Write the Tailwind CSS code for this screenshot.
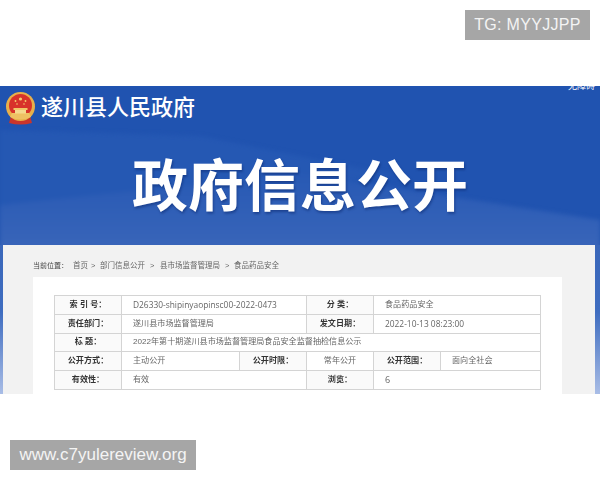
<!DOCTYPE html>
<html lang="zh-CN">

<head>
    <meta charset="UTF-8">
    <title>政府信息公开</title>
    <script src="https://cdn.jsdelivr.net/npm/@tailwindcss/browser@4"></script>
</head>

<body class="bg-white">
    <div class="relative w-[600px] h-[480px] overflow-hidden bg-white font-['Liberation_Sans','Noto_Sans_CJK_SC',sans-serif]">
        <!-- top right badge -->
        <div class="absolute z-10 top-[10px] right-[10px] w-[125px] h-[30px] flex items-center justify-center bg-[#a6a6a6] text-[#f4f4f4] text-[16px] tracking-[0.3px]">TG: MYYJJPP</div>

        <!-- article picture -->
        <div class="pt-[86px]">
            <div class="relative h-[308px] overflow-hidden bg-[#2053b0] flex flex-col">
                <!-- swooshes behind -->
                <svg class="absolute inset-0 blur-[2px]" width="600" height="308" viewBox="0 0 600 308">
                    <defs>
                        <linearGradient id="lowGlow" x1="0" y1="0" x2="0" y2="1">
                            <stop offset="0" stop-color="#2759b4" />
                            <stop offset="0.45" stop-color="#3f69bb" />
                            <stop offset="1" stop-color="#4169ba" />
                        </linearGradient>
                    </defs>
                    <path d="M0 44 L200 50 L400 90 L0 119 Z" fill="#2558b3" />
                    <path d="M0 119 L180 100 L300 87 L600 134 L600 308 L0 308 Z" fill="url(#lowGlow)" />
                </svg>
                <svg class="absolute inset-0" width="600" height="308" viewBox="0 0 600 308">
                    <defs>
                        <linearGradient id="sideGlow" x1="0" y1="0" x2="0" y2="1">
                            <stop offset="0" stop-color="#3a67ba" />
                            <stop offset="0.45" stop-color="#3f6dc0" />
                            <stop offset="1" stop-color="#a9bde6" />
                        </linearGradient>
                    </defs>
                    <rect x="0" y="159" width="3" height="149" fill="url(#sideGlow)" />
                    <rect x="595" y="159" width="5" height="149" fill="url(#sideGlow)" />
                </svg>

                <!-- header -->
                <div class="relative shrink-0 h-[48px] pl-[5px] pt-[6px] flex items-start gap-[5px]">
                    <svg width="31" height="33" viewBox="0 0 31 33">
                        <path d="M6 24 L25 24 L27 31 Q15.5 34 4 31 Z" fill="#c9352b" />
                        <circle cx="15.5" cy="14.5" r="14.5" fill="#e8b04a" />
                        <circle cx="15.5" cy="13.5" r="11.5" fill="#d8322a" />
                        <path d="M7 21 H24 L26 25 Q15.5 30 5 25 Z" fill="#eec163" />
                        <rect x="8.5" y="16" width="14" height="2" fill="#f0c766" />
                        <rect x="10" y="18" width="11" height="3.5" fill="#f5d98e" />
                        <circle cx="15.5" cy="7" r="1.6" fill="#f3cc6d" />
                        <circle cx="10.5" cy="9" r="0.9" fill="#f3cc6d" />
                        <circle cx="20.5" cy="9" r="0.9" fill="#f3cc6d" />
                        <circle cx="12" cy="12" r="0.8" fill="#f3cc6d" />
                        <circle cx="19" cy="12" r="0.8" fill="#f3cc6d" />
                    </svg>
                    <span class="text-white text-[22px] leading-[30px] mt-[1px] font-medium">遂川县人民政府</span>
                </div>

                <!-- title -->
                <h1 class="relative shrink-0 mt-[23px] h-[60px] text-center text-white text-[56px] leading-[60px] font-bold drop-shadow-[1px_2px_1px_rgba(10,40,110,0.5)]">政府信息公开</h1>

                <!-- content panel -->
                <div class="relative mt-[28px] mx-[3px] w-[592px] flex-1 min-h-0 overflow-hidden bg-[#f2f2f2] blur-[0.4px]">
                    <div class="h-[32px] pl-[30px] pt-[14px] text-[7.5px] leading-[14px] text-[#666] flex whitespace-nowrap">
                        <span class="w-[40px] text-[7px] text-[#444]">当前位置：</span><span class="w-[18px]">首页</span><span class="w-[9px]">&gt;</span><span class="w-[50px]">部门信息公开</span><span class="w-[10px]">&gt;</span><span class="w-[65px]">县市场监督管理局</span><span class="w-[9px]">&gt;</span><span>食品药品安全</span>
                    </div>
                    <div class="ml-[30px] w-[529px] h-[120px] bg-white pt-[18px] pl-[21px]">
                        <table class="table-fixed border-collapse w-[486px] text-[8.1px] text-[#666] bg-white">
                            <colgroup>
                                <col class="w-[67px]">
                                <col class="w-[118px]">
                                <col class="w-[67px]">
                                <col class="w-[67px]">
                                <col class="w-[67px]">
                                <col class="w-[100px]">
                            </colgroup>
                            <tbody>
                                <tr class="h-[19px]">
                                    <th class="border border-[#d4d4d4] bg-[#fafafa] font-bold text-[#333]">索 引 号：</th>
                                    <td colspan="2" class="border border-[#d4d4d4] pl-[11px] text-[8.4px] font-['Open_Sans']">D26330-shipinyaopinsc00-2022-0473</td>
                                    <th class="border border-[#d4d4d4] bg-[#fafafa] font-bold text-[#333]">分 类：</th>
                                    <td colspan="2" class="border border-[#d4d4d4] pl-[11px]">食品药品安全</td>
                                </tr>
                                <tr class="h-[19px]">
                                    <th class="border border-[#d4d4d4] bg-[#fafafa] font-bold text-[#333]">责任部门：</th>
                                    <td colspan="2" class="border border-[#d4d4d4] pl-[11px]">遂川县市场监督管理局</td>
                                    <th class="border border-[#d4d4d4] bg-[#fafafa] font-bold text-[#333]">发文日期：</th>
                                    <td colspan="2" class="border border-[#d4d4d4] pl-[11px] text-[8.4px] font-['Open_Sans']">2022-10-13 08:23:00</td>
                                </tr>
                                <tr class="h-[18px]">
                                    <th class="border border-[#d4d4d4] bg-[#fafafa] font-bold text-[#333]">标 题：</th>
                                    <td colspan="5" class="border border-[#d4d4d4] pl-[11px]">2022年第十期遂川县市场监督管理局食品安全监督抽检信息公示</td>
                                </tr>
                                <tr class="h-[19px]">
                                    <th class="border border-[#d4d4d4] bg-[#fafafa] font-bold text-[#333]">公开方式：</th>
                                    <td class="border border-[#d4d4d4] pl-[11px]">主动公开</td>
                                    <th class="border border-[#d4d4d4] bg-[#fafafa] font-bold text-[#333]">公开时限：</th>
                                    <td class="border border-[#d4d4d4] text-center">常年公开</td>
                                    <th class="border border-[#d4d4d4] bg-[#fafafa] font-bold text-[#333]">公开范围：</th>
                                    <td class="border border-[#d4d4d4] pl-[11px]">面向全社会</td>
                                </tr>
                                <tr class="h-[19px]">
                                    <th class="border border-[#d4d4d4] bg-[#fafafa] font-bold text-[#333]">有效性：</th>
                                    <td colspan="2" class="border border-[#d4d4d4] pl-[11px]">有效</td>
                                    <th class="border border-[#d4d4d4] bg-[#fafafa] font-bold text-[#333]">浏览：</th>
                                    <td colspan="2" class="border border-[#d4d4d4] pl-[11px] text-[9px] font-['Open_Sans']">6</td>
                                </tr>
                            </tbody>
                        </table>
                    </div>
                </div>

                <!-- cropped link at the picture's top edge -->
                <span class="absolute top-[-6px] left-[568px] text-[9px] leading-[12px] text-white">无障碍</span>
            </div>
        </div>

        <!-- bottom left badge -->
        <div class="absolute z-10 left-[10px] top-[440px] w-[186px] h-[30px] flex items-center justify-center bg-[#a6a6a6] text-[#f4f4f4] text-[17px]">www.c7yulereview.org</div>
    </div>
</body>

</html>
